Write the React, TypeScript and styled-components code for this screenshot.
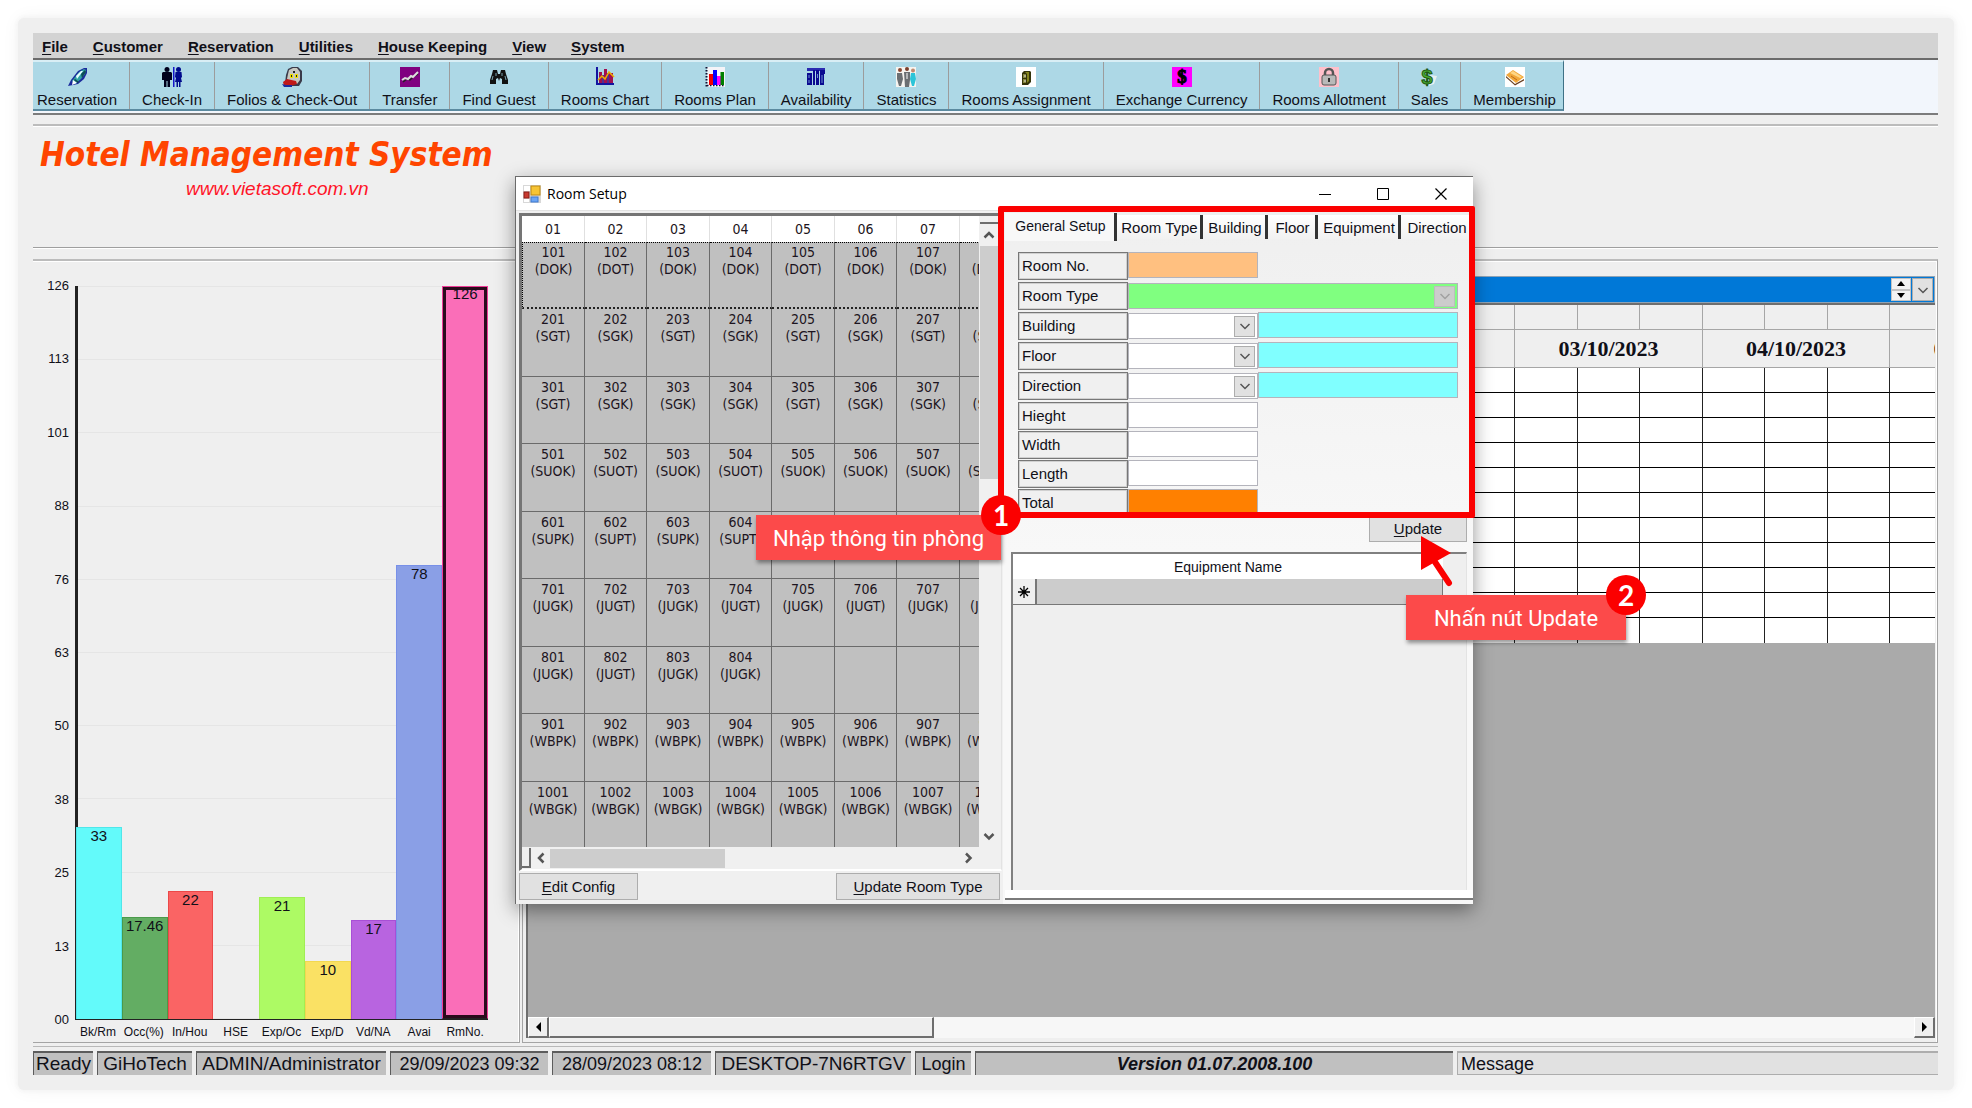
import React from 'react';
import styled, { createGlobalStyle, css } from 'styled-components';

const ARIAL = '"Liberation Sans", Arial, sans-serif';
const TAHOMA = '"DejaVu Sans Condensed", "DejaVu Sans", sans-serif';
const FACE = '#efefef';
const DARK = '#6e6e6e';

const GlobalStyle = createGlobalStyle`
  *, *::before, *::after { box-sizing: border-box; }
  body { margin: 0; background: #fff; font-family: ${ARIAL}; color: #101018; }
  button, input, select { font: inherit; color: inherit; margin: 0; padding: 0; border-radius: 0; }
  u { text-underline-offset: 2px; }
`;

const Page = styled.div`
  min-height: 100vh;
  padding: 18px;
  display: flex;
`;

const Shell = styled.div`
  flex: 1;
  min-width: 0;
  display: flex;
  padding: 15px 16px 15px 15px;
  border-radius: 6px;
  background: ${FACE};
  box-shadow: 0 0 4px 1px #f3f3f3, 0 0 18px rgba(0, 0, 0, 0.05);
`;

const Screen = styled.div`
  position: relative;
  flex: 1;
  min-width: 0;
  display: flex;
  flex-direction: column;
`;

/* ---------- menu and toolbar ---------- */

const MenuBar = styled.nav`
  display: flex;
  gap: 25px;
  height: 27px;
  padding: 2px 9px 0;
  align-items: center;
  background: #d3d3d3;
  border-bottom: 2px solid #6b6b6b;
`;

const MenuItem = styled.button`
  border: 0;
  background: none;
  font-size: 15px;
  line-height: 18px;
  font-weight: bold;
  white-space: nowrap;
`;

const ToolStrip = styled.div`
  display: flex;
  background: #f2f6fc;
  border-bottom: 2px solid #7c7c7c;
  padding-bottom: 2px;
`;

const Tools = styled.div`
  display: flex;
  border-top: 2px solid #d9eef5;
  border-right: 1px solid #3f7186;
  border-bottom: 2px solid #5b8aa0;
  background: #add8e6;
`;

const Tool = styled.button`
  display: flex;
  flex-direction: column;
  align-items: center;
  gap: 4px;
  height: 47px;
  padding: 5px 12px 0;
  border: 0;
  border-right: 1px solid #9c9c9c;
  background: none;
  font-size: 15px;
  line-height: 18px;
  white-space: nowrap;
  &:first-child { padding-left: 4px; }
  &:last-child { padding-right: 7px; border-right: 0; }
  svg { width: 20px; height: 20px; display: block; }
`;

/* ---------- banner ---------- */

const Banner = styled.header`
  height: 124px;
  margin: 9px 0 11px;
  padding: 9px 7px;
  border-top: 2px solid #bcbcbc;
  border-bottom: 1px solid #9f9f9f;
  box-shadow: inset 0 1px #fff, 0 1px #fff;
`;

const BannerText = styled.div`
  display: inline-flex;
  flex-direction: column;
  align-items: center;
`;

const Title = styled.h1`
  margin: 0;
  font: italic bold 33px/40px ${TAHOMA};
  color: #ff4500;
  white-space: nowrap;
`;

const Site = styled.a`
  padding-left: 22px;
  font-size: 19px;
  font-style: italic;
  line-height: 28px;
  color: #ff1428;
  text-decoration: none;
`;

/* ---------- work area ---------- */

const Work = styled.main`
  flex: 1;
  display: grid;
  grid-template-columns: 487px minmax(0, 1fr);
  gap: 2px;
`;

const Panel = styled.section`
  display: flex;
  flex-direction: column;
  min-width: 0;
  border-top: 2px solid #bcbcbc;
  border-right: 1px solid #a4a4a4;
  border-bottom: 1px solid #a4a4a4;
  box-shadow: inset 0 1px #fff, inset -1px 0 #fff;
`;

const ChartPanel = styled(Panel)`
  padding: 25px 31px 0 0;
`;

const ChartRow = styled.div`
  flex: 1;
  display: grid;
  grid-template-columns: 36px 1fr;
  column-gap: 6px;
`;

const Scale = styled.div`
  display: flex;
  flex-direction: column;
  justify-content: space-between;
  align-items: flex-end;
  margin: -7px 0;
  font-size: 13px;
  line-height: 14px;
`;

const Plot = styled.div`
  position: relative;
  border-bottom: 1px solid #222;
`;

const Rules = styled.div`
  position: absolute;
  inset: 0;
  display: flex;
  flex-direction: column;
  justify-content: space-between;
  border-left: 3px solid #222;
  i { height: 1px; background: #e5e5e5; }
`;

const Bars = styled.div`
  position: relative;
  height: 100%;
  padding-left: 1px;
  display: grid;
  grid-template-columns: repeat(9, 1fr);
  align-items: end;
`;

const Bar = styled.div<{ $fill: string; $edge: string; $framed?: boolean }>`
  background: ${p => p.$fill};
  border: 1px solid ${p => p.$edge};
  border-bottom: 0;
  padding-top: ${p => (p.$framed ? 0 : 1)}px;
  font-size: 15px;
  line-height: 14px;
  text-align: center;
  overflow: hidden;
  ${p => p.$framed && css`
    border-bottom: 1px solid #222;
    box-shadow: inset 0 0 0 3px #2a0a1c;
  `}
`;

const AxisNames = styled.div`
  display: grid;
  grid-template-columns: repeat(9, 1fr);
  height: 22px;
  padding-left: 42px;
  font-size: 12px;
  line-height: 24px;
  text-align: center;
`;

/* ---------- schedule ---------- */

const SchedulePanel = styled(Panel)`
  border-left: 1px solid #a4a4a4;
  padding: 15px 2px 4px 3px;
`;

const BlueCombo = styled.div`
  display: flex;
  gap: 1px;
  height: 27px;
  padding: 1px;
  background: #0078d7;
  border: 1px solid #8fa3b5;
  input { flex: 1; min-width: 0; border: 0; background: #0078d7; }
`;

const SpinBox = styled.div`
  width: 20px;
  display: grid;
  grid-template-rows: 1fr 1fr;
`;

const TinyButton = styled.button`
  display: grid;
  place-items: center;
  border: 1px solid #c4c4c4;
  background: #f3f3f3;
`;

const DropButton = styled(TinyButton)`
  width: 21px;
  border-color: #adadad;
  background: #e1e1e1;
`;

const ScheduleFrame = styled.div`
  flex: 1;
  display: flex;
  flex-direction: column;
  border-left: 2px solid ${DARK};
  border-top: 2px solid ${DARK};
  background: #aaa;
  overflow: hidden;
`;

const ScheduleView = styled.div`
  flex: 1;
  overflow: hidden;
`;

const Schedule = styled.table`
  table-layout: fixed;
  width: 1550px;
  border-collapse: separate;
  border-spacing: 0;
  col { width: 62px; }
  col:nth-child(odd) { width: 63px; }
  col:first-child { width: 50px; }
  th, td { padding: 0; }
  th { background: ${FACE}; border-right: 1px solid #a6a6a6; border-bottom: 1px solid #a6a6a6; }
  td { background: #fff; height: 25px; border-right: 1px solid #222; border-bottom: 1px solid #000; }
  tbody tr:last-child td { border-bottom: 0; }
`;

const DayPart = styled.th`
  height: 25px;
`;

const Day = styled.th`
  height: 38px;
  font: bold 22px/24px "Liberation Serif", "Times New Roman", serif;
`;

const ClassicScroll = styled.div`
  display: flex;
  height: 21px;
  background: #f7f7f7;
`;

const ClassicArrow = styled.button`
  width: 21px;
  display: grid;
  place-items: center;
  background: ${FACE};
  border: 1px solid #fff;
  border-right: 2px solid ${DARK};
  border-bottom: 2px solid ${DARK};
`;

const ClassicThumb = styled.div`
  width: 385px;
  background: ${FACE};
  border: 1px solid #fff;
  border-right: 2px solid ${DARK};
  border-bottom: 2px solid ${DARK};
`;

const Filler = styled.div`
  flex: 1;
`;

/* ---------- status bar ---------- */

const StatusBar = styled.footer`
  display: flex;
  gap: 4px;
  margin-top: 3px;
  padding-top: 4px;
  border-top: 1px solid #b8b8b8;
  font-size: 18px;
  line-height: 22px;
  white-space: nowrap;
`;

const StatusCell = styled.div<{ $w?: number; $name?: boolean; $version?: boolean; $plain?: boolean }>`
  ${p => (p.$w ? `width: ${p.$w}px;` : 'flex: 1;')}
  height: 24px;
  text-align: ${p => (p.$plain ? 'left' : 'center')};
  padding-left: ${p => (p.$plain ? 3 : 0)}px;
  background: ${p => (p.$plain ? '#e1e1e1' : '#c0c0c0')};
  border-top: ${p => (p.$plain ? '2px solid #adadad' : '2px solid #5c5c5c')};
  border-left: 1px solid ${p => (p.$plain ? '#adadad' : '#5c5c5c')};
  ${p => p.$plain && 'border-bottom: 1px solid #adadad;'}
  ${p => p.$name && 'font-size: 19px;'}
  ${p => p.$version && 'font-weight: bold; font-style: italic;'}
`;

/* ---------- room setup window ---------- */

const Window = styled.div`
  position: absolute;
  left: 482px;
  top: 143px;
  width: 958px;
  background: #f0f0f0;
  border-top: 1px solid #6b6b6b;
  border-left: 1px solid #6b6b6b;
  box-shadow: 0 6px 18px rgba(0, 0, 0, 0.42);
`;

const TitleBar = styled.div`
  display: flex;
  align-items: center;
  height: 34px;
  padding: 0 3px 0 7px;
  background: #fff;
  border-bottom: 1px solid #e2e2e2;
  svg { display: block; }
`;

const WindowTitle = styled.h2`
  flex: 1;
  margin: 0 0 0 6px;
  font: 14px/20px "Open Sans", "Noto Sans", sans-serif;
  color: #000;
`;

const WindowButton = styled.button`
  width: 58px;
  height: 32px;
  display: grid;
  place-items: center;
  border: 0;
  background: none;
`;

const WindowBody = styled.div`
  display: grid;
  grid-template-columns: 487px minmax(0, 1fr);
`;

const LeftPane = styled.div`
  padding: 2px 1px 4px 3px;
`;

const GridFrame = styled.div`
  display: grid;
  grid-template-columns: minmax(0, 1fr) 22px;
  grid-template-rows: 631px 22px;
  border-top: 3px solid #757575;
  border-left: 3px solid #757575;
  border-right: 1px solid #e3e3e3;
  border-bottom: 2px solid #fff;
`;

const GridView = styled.div`
  overflow: hidden;
  background: #c0c0c0;
`;

const Rooms = styled.table`
  table-layout: fixed;
  width: 500px;
  border-collapse: separate;
  border-spacing: 0;
  font: 14px/17px ${TAHOMA};
  text-align: center;
  color: #1c1420;
  col { width: 62px; }
  col:nth-child(odd) { width: 63px; }
  th { height: 26px; padding: 0; font-weight: normal; background: #fff; border-right: 1px solid #e0e0e0; }
  td {
    height: 67px;
    padding: 2px 0 0;
    vertical-align: top;
    background: #c0c0c0;
    border-right: 1px solid #6a6a6a;
    border-bottom: 1px solid #6a6a6a;
  }
  tr:nth-child(even) td { height: 68px; }
  tbody tr:first-child td { border-top: 1px dotted #000; border-bottom: 2px dotted #222; padding-top: 1px; }
  tbody tr:first-child td:first-child { border-left: 1px dotted #000; }
`;

const VScroll = styled.div`
  display: flex;
  flex-direction: column;
  padding: 0 2px 0 1px;
  background: #f0f0f0;
`;

const SplitTop = styled.div`
  height: 8px;
  border-bottom: 2px solid ${DARK};
`;

const ScrollArrow = styled.button`
  width: 18px;
  height: 22px;
  display: grid;
  place-items: center;
  border: 0;
  background: none;
`;

const VThumb = styled.div`
  height: 233px;
  background: #cdcdcd;
`;

const HScroll = styled.div`
  display: flex;
  align-items: center;
  padding: 1px 2px 1px 0;
  background: #f0f0f0;
`;

const SplitLeft = styled.div`
  width: 9px;
  height: 20px;
  margin-right: 1px;
  border-right: 2px solid ${DARK};
  border-bottom: 2px solid ${DARK};
`;

const HThumb = styled.div`
  width: 175px;
  height: 19px;
  background: #cdcdcd;
`;

const ButtonRow = styled.div`
  display: flex;
  justify-content: space-between;
  padding: 2px 2px 0 0;
`;

const PushButton = styled.button<{ $w: number }>`
  width: ${p => p.$w}px;
  height: 27px;
  border: 1px solid #adadad;
  background: #e1e1e1;
  font-size: 15px;
  line-height: 18px;
`;

const RightPane = styled.div`
  display: flex;
  flex-direction: column;
  padding: 0 0 4px 2px;
  background: linear-gradient(#efefef, #f8f8f8 340px, #f8f8f8);
`;

const Tabs = styled.div`
  display: flex;
  align-items: flex-end;
  height: 30px;
  overflow: hidden;
`;

const Tab = styled.button<{ $w: number; $active?: boolean }>`
  flex: none;
  width: ${p => p.$w}px;
  height: ${p => (p.$active ? 28 : 24)}px;
  margin-bottom: ${p => (p.$active ? 0 : 2)}px;
  padding: ${p => (p.$active ? '0 0 2px 2px' : '2px 0 0 2px')};
  border: 0;
  border-right: 3px solid #333;
  background: ${p => (p.$active ? '#f8f8f8' : 'linear-gradient(#fff, #f1f1f1)')};
  font-size: ${p => (p.$active ? 14 : 15)}px;
  line-height: 18px;
  &:last-child { border-right: 0; }
`;

const Form = styled.form`
  display: flex;
  flex-direction: column;
  gap: 4px;
  padding: 11px 13px 0;
`;

const Sizes = styled.div`
  display: flex;
  flex-direction: column;
  gap: 3px;
`;

const Field = styled.div`
  display: grid;
  grid-template-columns: 110px 130px 200px;
  height: 26px;
`;

const Label = styled.label`
  padding: 0 3px;
  border: 1px solid #777;
  box-shadow: inset 0 0 0 1px #d0d0d0;
  background: #f0f0f0;
  font-size: 15px;
  line-height: 26px;
`;

const TextBox = styled.input<{ $fill?: string }>`
  width: 100%;
  height: 26px;
  border: 1px solid #b4b4bc;
  background: ${p => p.$fill || '#fff'};
  font-size: 15px;
`;

const Picker = styled.div<{ $wide?: boolean }>`
  display: grid;
  align-items: center;
  ${p => p.$wide && 'grid-column: 2 / 4;'}
  > * { grid-area: 1 / 1; }
`;

const Select = styled.select<{ $fill?: string }>`
  width: 100%;
  height: 26px;
  appearance: none;
  border: 1px solid #b4b4bc;
  background: ${p => p.$fill || '#fff'};
  font-size: 15px;
  opacity: 1;
`;

const PickerArrow = styled.span<{ $muted?: boolean }>`
  justify-self: end;
  width: 21px;
  height: 21px;
  margin-right: 3px;
  display: grid;
  place-items: center;
  border: 1px solid ${p => (p.$muted ? '#bdbdbd' : '#adadad')};
  background: ${p => (p.$muted ? '#cccccc' : '#e1e1e1')};
  pointer-events: none;
`;

const UpdateRow = styled.div`
  display: flex;
  justify-content: flex-end;
  padding-right: 6px;
`;

const ListFrame = styled.div`
  flex: 1;
  margin: 10px 6px 0 6px;
  border-top: 2px solid #808080;
  border-left: 2px solid #808080;
  border-right: 1px solid #e3e3e3;
  background: ${FACE};
`;

const ListFoot = styled.div`
  height: 10px;
  background: #fff;
  border-bottom: 2px solid #7a7a7a;
`;

const Equipment = styled.table`
  width: calc(100% - 23px);
  border-collapse: separate;
  border-spacing: 0;
  font-size: 14px;
  th { height: 25px; padding: 0; font-weight: normal; background: #fff; }
  td { height: 26px; padding: 0; border-bottom: 1px solid #777; }
  td:first-child { width: 24px; text-align: center; border-right: 2px solid #777; }
  td:last-child { background: #ccc; border-right: 1px solid #777; }
  svg { display: block; margin: 0 auto; }
`;

/* ---------- guide marks ---------- */

const GuideFrame = styled.div`
  position: absolute;
  left: 482px;
  top: 29px;
  width: 477px;
  height: 312px;
  border: 6px solid #fb0000;
  border-radius: 2px;
  pointer-events: none;
`;

const Callout = styled.div<{ $x: number; $y: number; $w: number }>`
  position: absolute;
  left: ${p => p.$x}px;
  top: ${p => p.$y}px;
  width: ${p => p.$w}px;
  height: 45px;
  background: #fc4a4a;
  box-shadow: 1px 3px 4px rgba(0, 0, 0, 0.4);
  color: #fff;
  font: 22px/48px Roboto, "Noto Sans", sans-serif;
  text-align: center;
  white-space: nowrap;
`;

const Step = styled.span`
  position: absolute;
  right: -20px;
  top: -20px;
  width: 40px;
  height: 40px;
  border-radius: 50%;
  background: #fb0000;
  font: bold 28px/40px Lato, "Open Sans", sans-serif;
`;

const Pointer = styled.svg`
  position: absolute;
  left: 905px;
  top: 359px;
`;

/* ---------- icons ---------- */

const Chevron = ({ dir = 'down', color = '#555', size = 12, weight = 2 }: { dir?: string; color?: string; size?: number; weight?: number }) => {
  const d: Record<string, string> = {
    down: 'M1.5 4 6 8.5 10.5 4',
    up: 'M1.5 8.5 6 4 10.5 8.5',
    left: 'M8.5 1.5 4 6 8.5 10.5',
    right: 'M4 1.5 8.5 6 4 10.5',
  };
  return (
    <svg width={size} height={size} viewBox="0 0 12 12" aria-hidden="true">
      <path d={d[dir]} fill="none" stroke={color} strokeWidth={weight} />
    </svg>
  );
};

const Triangle = ({ points, w, h }: { points: string; w: number; h: number }) => (
  <svg width={w} height={h} aria-hidden="true"><polygon points={points} fill="#000" /></svg>
);

const icons: Record<string, React.ReactNode> = {
  pen: (
    <>
      <path d="M1 19 4 13 11 4 17 1l3 0v5l-3 6-6 5-5 1z" fill="#1b2a9c" />
      <path d="M5 14 12 5l5-3 2 1-1 4-4 5-6 5z" fill="#2fa3a3" />
      <path d="M9 9 14 4l2 0-6 8z" fill="#e6ffff" />
      <path d="M14 7l4-4 1 2-4 6z" fill="#0d4f55" />
      <path d="M6 13l4 3-5 2z" fill="#fff" />
      <path d="M8 12l4 3-1 1-4-3z" fill="#14464a" />
    </>
  ),
  people: (
    <>
      <circle cx="5" cy="2.5" r="2.5" fill="#00001c" />
      <path d="M1 5h8l1 1v7H8v7H5.500v-6h-1v6H2v-7H0V6z" fill="#00001c" />
      <path d="M11 0h1.500v20H11z" fill="#1414c8" />
      <circle cx="16.500" cy="2.500" r="2.500" fill="#000a8c" />
      <path d="M13.500 5h6l.5 5-1 1 1 4h-1.500v5h-1.500v-5h-1v5h-1.500v-5H13l1-4-1-1z" fill="#000a8c" />
    </>
  ),
  face: (
    <>
      <path d="M6 2 10 0h6l4 4v10l-3 5H7l-4-3 1-8z" fill="#3a3a4a" />
      <path d="M7 3l4-2h4l3 4v8l-3 4H8l-3-5 1-5z" fill="#c8c8c0" />
      <path d="M8 7h3v4H8zM13 7h3v4h-3z" fill="#f0e000" />
      <path d="M9 8h1v2H9zM14 8h1v2h-1zM11 4h2v2h-2z" fill="#222" />
      <path d="M1 15l4-3 9 2 1 3-7 2H2z" fill="#c01818" />
      <path d="M0 17l4 1 6 0v2H2z" fill="#1b2a9c" />
    </>
  ),
  transfer: (
    <>
      <path d="M0 0h20v20H0z" fill="#800080" />
      <path d="M3 15l4-3 3 1 4-4 4-2" fill="none" stroke="#222" strokeWidth="1.500" />
      <path d="M2 13l3-2 3 1 3-3 2 1 5-5" fill="none" stroke="#ddd" strokeWidth="2" />
    </>
  ),
  binoculars: (
    <>
      <path d="M4 3h4l1 4h2l1-4h4l1 4 2 6v4h-6v-5l-2-1-1 3-1-3-2 1v5H1v-4l2-6z" fill="#111" />
      <path d="M4 9l-1 4M16 9l1 4M7 6v3M13 6v3" stroke="#78a0ac" />
    </>
  ),
  chart: (
    <>
      <path d="M2 0v17h17" fill="none" stroke="#1414a0" strokeWidth="2" />
      <path d="M4 5h3v11H4zM9 2h3v14H9zM14 6h4v10h-4z" fill="#a01050" />
      <path d="M7 8h2v8H7zM12 6h2v10h-2z" fill="#503090" />
      <path d="M3 13l4-4 3 3 4-7 5 5" fill="none" stroke="#f0b000" strokeWidth="1.500" />
    </>
  ),
  plan: (
    <>
      <path d="M2 0h18v20H2z" fill="#f4f4f8" />
      <path d="M1.500 0v20" stroke="#113" strokeWidth="2" strokeDasharray="1.5 1.5" />
      <path d="M2 18.500h18" stroke="#113" strokeWidth="1.500" strokeDasharray="1.5 1.5" />
      <path d="M4 7h4v11H4z" fill="#f00000" />
      <path d="M8 3h4v15H8z" fill="#0000ff" />
      <path d="M12 9h4v9h-4z" fill="#ff00ff" />
      <path d="M15.500 5H19v13h-3.500z" fill="#008000" />
    </>
  ),
  availability: (
    <>
      <path d="M1 1h18v3H1z" fill="#2a2ab0" />
      <path d="M1 6h5v12H1zM7 3h2v15H7zM10 3h3v15h-3zM14 3h5v4h-1v11h-4z" fill="#0a0a90" />
      <path d="M3 8v3M3 13v3M16 8v8M11.500 7v4" stroke="#6c90d0" />
    </>
  ),
  statistics: (
    <>
      <path d="M0 0h20v20H0z" fill="#f6f4f0" />
      <path d="M1 6h5l1 6-2 7H3L1 12zM8 5h6v8l-1 7h-4z" fill="#6b6f72" />
      <path d="M15 6h4l1 6-2 7h-2l-2-7z" fill="#2cc4d8" />
      <circle cx="4" cy="3" r="2" fill="#8a4a34" />
      <circle cx="11" cy="2" r="2" fill="#7a3e2c" />
      <circle cx="17" cy="3.500" r="2" fill="#c08a70" />
      <path d="M11 6v6" stroke="#fff" />
    </>
  ),
  cabinet: (
    <>
      <path d="M0 0h20v20H0z" fill="#fff" />
      <path d="M6 6l2-2h6l1 1v10l-3 3H6z" fill="#33330a" />
      <path d="M9 5h4v9l-2 2V7z" fill="#84841c" />
      <path d="M7 7h3v4H7zM7 12h3v4H7z" fill="#84843a" />
      <path d="M8 9h2M8 14h2" stroke="#ddd" />
    </>
  ),
  exchange: (
    <>
      <path d="M0 0h20v20H0z" fill="#ff00ff" />
      <text x="10" y="16" textAnchor="middle" fontFamily="Liberation Serif" fontWeight="bold" fontSize="19" stroke="#000">$</text>
    </>
  ),
  lock: (
    <>
      <path d="M0 0h20v20H0z" fill="#ffc0cb" />
      <path d="M6 9V6a4 4 0 0 1 8 0v3" fill="none" stroke="#555" strokeWidth="2.500" />
      <rect x="3" y="8" width="14" height="10" rx="2" fill="#b9b9b9" stroke="#555" />
      <path d="M9 11h2v4H9z" fill="#333" />
    </>
  ),
  sales: (
    <>
      <path d="M10 8l7 1-3 8-6 2z" fill="#e8f0f0" />
      <text x="7" y="17" textAnchor="middle" fontFamily="Liberation Sans" fontWeight="bold" fontSize="20" fill="#4cae30" stroke="#1b5a14">$</text>
    </>
  ),
  member: (
    <>
      <path d="M0 0h20v20H0z" fill="#fff" />
      <path d="M1 9l9 8 9-5v1.500l-9 5-9-8z" fill="#6a4020" />
      <path d="M1 8l7-5 11 7-8 6z" fill="#f2a83a" />
      <path d="M5 6l3-2 9 6-2 1z" fill="#ffd684" />
      <path d="M6 9l6 4" stroke="#c06a1a" />
    </>
  ),
};

/* ---------- data ---------- */

const menus = ['File', 'Customer', 'Reservation', 'Utilities', 'House Keeping', 'View', 'System'];

const tools = [
  ['Reservation', 'pen'], ['Check-In', 'people'], ['Folios & Check-Out', 'face'], ['Transfer', 'transfer'],
  ['Find Guest', 'binoculars'], ['Rooms Chart', 'chart'], ['Rooms Plan', 'plan'], ['Availability', 'availability'],
  ['Statistics', 'statistics'], ['Rooms Assignment', 'cabinet'], ['Exchange Currency', 'exchange'],
  ['Rooms Allotment', 'lock'], ['Sales', 'sales'], ['Membership', 'member'],
];

const scale = ['126', '113', '101', '88', '76', '63', '50', '38', '25', '13', '00'];

const bars = [
  { name: 'Bk/Rm', value: 33, fill: '#63fafa', edge: '#4fe6ea' },
  { name: 'Occ(%)', value: 17.46, fill: '#63ad63', edge: '#4a9a4a' },
  { name: 'In/Hou', value: 22, fill: '#fa6464', edge: '#ec4848' },
  { name: 'HSE', value: 0, fill: 'transparent', edge: 'transparent' },
  { name: 'Exp/Oc', value: 21, fill: '#adfa64', edge: '#a0ee54' },
  { name: 'Exp/D', value: 10, fill: '#fae164', edge: '#f2d850' },
  { name: 'Vd/NA', value: 17, fill: '#b864e0', edge: '#a84fd6' },
  { name: 'Avai', value: 78, fill: '#8a9fe6', edge: '#7890e8' },
  { name: 'RmNo.', value: 126, fill: '#fa6eb8', edge: '#f03c98' },
];

const roomRows: [number, string[]][] = [
  [1, ['DOK', 'DOT', 'DOK', 'DOK', 'DOT', 'DOK', 'DOK', 'DOK']],
  [2, ['SGT', 'SGK', 'SGT', 'SGK', 'SGT', 'SGK', 'SGT', 'SGK']],
  [3, ['SGT', 'SGK', 'SGK', 'SGK', 'SGT', 'SGK', 'SGK', 'SGK']],
  [5, ['SUOK', 'SUOT', 'SUOK', 'SUOT', 'SUOK', 'SUOK', 'SUOK', 'SUOK']],
  [6, ['SUPK', 'SUPT', 'SUPK', 'SUPT', '', '', '', '']],
  [7, ['JUGK', 'JUGT', 'JUGK', 'JUGT', 'JUGK', 'JUGT', 'JUGK', 'JUGK']],
  [8, ['JUGK', 'JUGT', 'JUGK', 'JUGK', '', '', '', '']],
  [9, Array(8).fill('WBPK')],
  [10, Array(8).fill('WBGK')],
];

const days = ['', '', '', '', '', '03/10/2023', '04/10/2023', '05/10/2023'];

const tabs: [string, number][] = [
  ['General Setup', 112], ['Room Type', 86], ['Building', 65], ['Floor', 50], ['Equipment', 83], ['Direction', 70],
];

const Mnemonic = ({ text }: { text: string }) => (
  <><u>{text[0]}</u>{text.slice(1)}</>
);

/* ---------- parts ---------- */

const Chart = () => (
  <ChartPanel aria-label="Room statistics">
    <ChartRow>
      <Scale>{scale.map(s => <span key={s}>{s}</span>)}</Scale>
      <Plot>
        <Rules>{scale.map(s => <i key={s} />)}</Rules>
        <Bars>
          {bars.map(b => (
            <Bar key={b.name} $fill={b.fill} $edge={b.edge} $framed={b.value === 126}
              style={{ height: `${(b.value / 126) * 100}%` }}>
              {b.value > 0 && b.value}
            </Bar>
          ))}
        </Bars>
      </Plot>
    </ChartRow>
    <AxisNames>{bars.map(b => <span key={b.name}>{b.name}</span>)}</AxisNames>
  </ChartPanel>
);

const ScheduleArea = () => (
  <SchedulePanel aria-label="Room schedule">
    <BlueCombo>
      <input aria-label="Period" readOnly />
      <SpinBox>
        <TinyButton aria-label="Next"><Triangle w={8} h={5} points="0,5 4,0 8,5" /></TinyButton>
        <TinyButton aria-label="Previous"><Triangle w={8} h={5} points="0,0 4,5 8,0" /></TinyButton>
      </SpinBox>
      <DropButton aria-label="Open"><Chevron weight={1.5} /></DropButton>
    </BlueCombo>
    <ScheduleFrame>
      <ScheduleView>
        <Schedule>
          <colgroup>{Array.from({ length: 25 }, (_, i) => <col key={i} />)}</colgroup>
          <thead>
            <tr>{Array.from({ length: 25 }, (_, i) => <DayPart key={i} />)}</tr>
            <tr>
              <Day />
              {days.map((d, i) => <Day key={i} colSpan={3}>{d}</Day>)}
            </tr>
          </thead>
          <tbody>
            {Array.from({ length: 11 }, (_, r) => (
              <tr key={r}>{Array.from({ length: 25 }, (_, c) => <td key={c} />)}</tr>
            ))}
          </tbody>
        </Schedule>
      </ScheduleView>
      <ClassicScroll>
        <ClassicArrow aria-label="Scroll left"><Triangle w={5} h={10} points="5,0 0,5 5,10" /></ClassicArrow>
        <ClassicThumb />
        <Filler />
        <ClassicArrow aria-label="Scroll right"><Triangle w={5} h={10} points="0,0 5,5 0,10" /></ClassicArrow>
      </ClassicScroll>
    </ScheduleFrame>
  </SchedulePanel>
);

const RoomGrid = () => (
  <GridFrame>
    <GridView>
      <Rooms>
        <colgroup>{Array.from({ length: 8 }, (_, i) => <col key={i} />)}</colgroup>
        <thead>
          <tr>{['01', '02', '03', '04', '05', '06', '07', ''].map(h => <th key={h}>{h}</th>)}</tr>
        </thead>
        <tbody>
          {roomRows.map(([floor, types]) => (
            <tr key={floor}>
              {types.map((t, i) => (
                <td key={i}>{t && <>{floor}0{i + 1}<br />({t})</>}</td>
              ))}
            </tr>
          ))}
        </tbody>
      </Rooms>
    </GridView>
    <VScroll>
      <SplitTop />
      <ScrollArrow aria-label="Scroll up"><Chevron dir="up" weight={2.5} /></ScrollArrow>
      <VThumb />
      <Filler />
      <ScrollArrow aria-label="Scroll down"><Chevron weight={2.5} /></ScrollArrow>
    </VScroll>
    <HScroll>
      <SplitLeft />
      <ScrollArrow aria-label="Scroll left"><Chevron dir="left" weight={2.5} /></ScrollArrow>
      <HThumb />
      <Filler />
      <ScrollArrow aria-label="Scroll right"><Chevron dir="right" weight={2.5} /></ScrollArrow>
    </HScroll>
    <VScroll />
  </GridFrame>
);

const SetupForm = () => (
  <Form onSubmit={e => e.preventDefault()}>
    <Field>
      <Label htmlFor="room-no">Room No.</Label>
      <TextBox id="room-no" $fill="#ffc080" />
    </Field>
    <Field>
      <Label htmlFor="room-type">Room Type</Label>
      <Picker $wide>
        <Select id="room-type" $fill="#80ff80" disabled />
        <PickerArrow $muted><Chevron color="#a0a0a0" weight={1.5} /></PickerArrow>
      </Picker>
    </Field>
    {['Building', 'Floor', 'Direction'].map(name => (
      <Field key={name}>
        <Label htmlFor={name}>{name}</Label>
        <Picker>
          <Select id={name} />
          <PickerArrow><Chevron weight={1.5} /></PickerArrow>
        </Picker>
        <TextBox $fill="#80ffff" aria-label={`${name} name`} readOnly />
      </Field>
    ))}
    <Sizes>
      {['Hieght', 'Width', 'Length', 'Total'].map(name => (
        <Field key={name}>
          <Label htmlFor={name}>{name}</Label>
          <TextBox id={name} $fill={name === 'Total' ? '#ff8000' : undefined} />
        </Field>
      ))}
    </Sizes>
  </Form>
);

const RoomSetup = () => (
  <Window role="dialog" aria-label="Room Setup">
    <TitleBar>
      <svg width="18" height="18" viewBox="0 0 18 18" aria-hidden="true">
        <path d="M0 0h18v18H0z" fill="#d8d8d8" />
        <path d="M1 1h6v5H1zM1 14h5v3H1z" fill="#fff" />
        <rect x="8" y="1" width="9" height="9" fill="#f6c434" stroke="#c08a10" />
        <rect x="1" y="7" width="5" height="6" fill="#c83a30" stroke="#8c1c16" />
        <rect x="8" y="12" width="7" height="5" fill="#6aa4f4" stroke="#3c78d0" />
      </svg>
      <WindowTitle>Room Setup</WindowTitle>
      <WindowButton aria-label="Minimize"><svg width="12" height="12"><path d="M0 6.500h12" stroke="#000" /></svg></WindowButton>
      <WindowButton aria-label="Maximize"><svg width="12" height="12"><path d="M.5.5h11v11H.5z" fill="none" stroke="#000" /></svg></WindowButton>
      <WindowButton aria-label="Close"><svg width="12" height="12"><path d="M.5.5l11 11M11.500.5l-11 11" stroke="#000" strokeWidth="1.200" /></svg></WindowButton>
    </TitleBar>
    <WindowBody>
      <LeftPane>
        <RoomGrid />
        <ButtonRow>
          <PushButton $w={119}><Mnemonic text="Edit Config" /></PushButton>
          <PushButton $w={164}><Mnemonic text="Update Room Type" /></PushButton>
        </ButtonRow>
      </LeftPane>
      <RightPane>
        <Tabs role="tablist">
          {tabs.map(([name, w], i) => (
            <Tab key={name} role="tab" $w={w} $active={i === 0}>{name}</Tab>
          ))}
        </Tabs>
        <SetupForm />
        <UpdateRow><PushButton $w={98}><Mnemonic text="Update" /></PushButton></UpdateRow>
        <ListFrame>
          <Equipment>
            <thead><tr><th colSpan={2}>Equipment Name</th></tr></thead>
            <tbody>
              <tr>
                <td>
                  <svg width="12" height="12" viewBox="0 0 12 12" aria-label="New row">
                    <path d="M6 0v12M0 6h12M2 2l8 8M10 2l-8 8" stroke="#000" strokeWidth="1.300" />
                  </svg>
                </td>
                <td />
              </tr>
            </tbody>
          </Equipment>
        </ListFrame>
        <ListFoot />
      </RightPane>
    </WindowBody>
    <GuideFrame />
    <Pointer width="36" height="52" viewBox="0 0 36 52" aria-hidden="true">
      <path d="M14 26 28 47" stroke="#fb0000" strokeWidth="6" strokeLinecap="round" />
      <path d="M0 0v34l30-17z" fill="#fb0000" />
    </Pointer>
    <Callout $x={240} $y={338} $w={245}>Nhập thông tin phòng<Step>1</Step></Callout>
    <Callout $x={890} $y={418} $w={220}>Nhấn nút Update<Step>2</Step></Callout>
  </Window>
);

export default function App() {
  return (
    <Page>
      <GlobalStyle />
      <Shell>
        <Screen>
          <MenuBar>{menus.map(m => <MenuItem key={m}><Mnemonic text={m} /></MenuItem>)}</MenuBar>
          <ToolStrip>
            <Tools role="toolbar">
              {tools.map(([name, icon]) => (
                <Tool key={name}>
                  <svg viewBox="0 0 20 20" aria-hidden="true">{icons[icon]}</svg>
                  {name}
                </Tool>
              ))}
            </Tools>
          </ToolStrip>
          <Banner>
            <BannerText>
              <Title>Hotel Management System</Title>
              <Site href="#">www.vietasoft.com.vn</Site>
            </BannerText>
          </Banner>
          <Work>
            <Chart />
            <ScheduleArea />
          </Work>
          <StatusBar>
            <StatusCell $w={60} $name>Ready</StatusCell>
            <StatusCell $w={95} $name>GiHoTech</StatusCell>
            <StatusCell $w={190} $name>ADMIN/Administrator</StatusCell>
            <StatusCell $w={158}>29/09/2023 09:32</StatusCell>
            <StatusCell $w={159}>28/09/2023 08:12</StatusCell>
            <StatusCell $w={196} $name>DESKTOP-7N6RTGV</StatusCell>
            <StatusCell $w={56}>Login</StatusCell>
            <StatusCell $version>Version 01.07.2008.100</StatusCell>
            <StatusCell $plain>Message</StatusCell>
          </StatusBar>
          <RoomSetup />
        </Screen>
      </Shell>
    </Page>
  );
}
